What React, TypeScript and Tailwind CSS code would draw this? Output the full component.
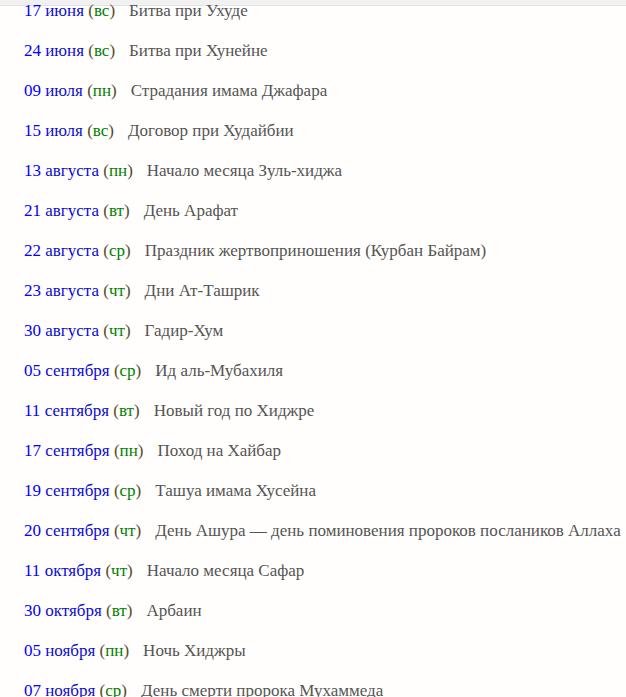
import React from 'react';

type Row = { day: string; month: string; wd: string; title: string };

const rows: Row[] = [
  { day: '17', month: 'июня', wd: 'вс', title: 'Битва при Ухуде' },
  { day: '24', month: 'июня', wd: 'вс', title: 'Битва при Хунейне' },
  { day: '09', month: 'июля', wd: 'пн', title: 'Страдания имама Джафара' },
  { day: '15', month: 'июля', wd: 'вс', title: 'Договор при Худайбии' },
  { day: '13', month: 'августа', wd: 'пн', title: 'Начало месяца Зуль-хиджа' },
  { day: '21', month: 'августа', wd: 'вт', title: 'День Арафат' },
  { day: '22', month: 'августа', wd: 'ср', title: 'Праздник жертвоприношения (Курбан Байрам)' },
  { day: '23', month: 'августа', wd: 'чт', title: 'Дни Ат-Ташрик' },
  { day: '30', month: 'августа', wd: 'чт', title: 'Гадир-Хум' },
  { day: '05', month: 'сентября', wd: 'ср', title: 'Ид аль-Мубахиля' },
  { day: '11', month: 'сентября', wd: 'вт', title: 'Новый год по Хиджре' },
  { day: '17', month: 'сентября', wd: 'пн', title: 'Поход на Хайбар' },
  { day: '19', month: 'сентября', wd: 'ср', title: 'Ташуа имама Хусейна' },
  { day: '20', month: 'сентября', wd: 'чт', title: 'День Ашура — день поминовения пророков послаников Аллаха' },
  { day: '11', month: 'октября', wd: 'чт', title: 'Начало месяца Сафар' },
  { day: '30', month: 'октября', wd: 'вт', title: 'Арбаин' },
  { day: '05', month: 'ноября', wd: 'пн', title: 'Ночь Хиджры' },
  { day: '07', month: 'ноября', wd: 'ср', title: 'День смерти пророка Мухаммеда' },
];

export default function App() {
  return (
    <div className="relative w-[626px] h-[697px] overflow-hidden bg-[#fffefc] [font-family:Liberation_Serif,Times_New_Roman,serif] text-[17px]">
      {/* top strip of the page frame */}
      <div className="absolute top-0 left-0 right-0 h-[6px] bg-[#f1f1f1] border-b border-[#e3e3e3]" />
      <div className="relative -mt-[9px] pl-[24px]">
        {rows.map((r, i) => (
          <div key={i} className="leading-[40px] whitespace-nowrap">
            <span className="text-[#0000ff]">{r.day} </span>
            <span className="text-[#0b0bd6]">{r.month} </span>
            <span className="text-[#5a4a2a]">(</span>
            <span className="text-[#008000]">{r.wd}</span>
            <span className="text-[#5a4a2a]">)</span>
            <span className="ml-[14px] text-[#555555]">{r.title}</span>
          </div>
        ))}
      </div>
    </div>
  );
}
